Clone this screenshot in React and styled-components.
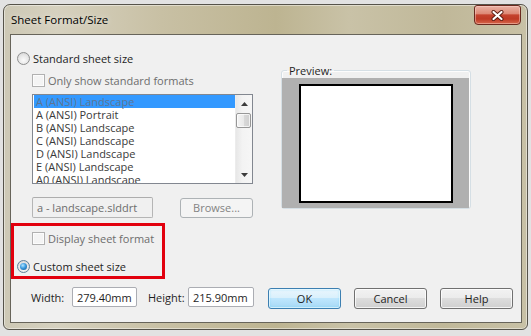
import React from "react";
import styled, { createGlobalStyle, css } from "styled-components";

const GlobalStyle = createGlobalStyle`
  html, body { margin: 0; padding: 0; }
  body {
    background: #e2e2e2;
    font-family: "Open Sans", "Noto Sans", "Liberation Sans", sans-serif;
    font-size: 11px;
    color: #1e1e1e;
  }
  * { box-sizing: border-box; }
`;

const Desktop = styled.div`
  width: 531px;
  height: 336px;
  padding: 4px 3px 0 3px;
  overflow: hidden;
`;

const Window = styled.div`
  width: 525px;
  height: 326px;
  border: 1px solid #56534a;
  border-radius: 7px 7px 6px 6px;
  background: linear-gradient(
    90deg,
    #cdc8b5 0%,
    #d6d1bf 10%,
    #c8c0a4 30%,
    #bdb491 52%,
    #c9c2a7 66%,
    #c0b899 84%,
    #c8c1a6 100%
  );
  box-shadow: inset 0 0 0 1px rgba(255, 255, 255, 0.45);
  display: flex;
  flex-direction: column;
  padding: 0 5px 6px 6px;
`;

const TitleBar = styled.div`
  height: 29px;
  display: flex;
  justify-content: space-between;
  align-items: center;
`;

const Title = styled.div`
  padding-left: 1px;
  font-size: 11.5px;
  color: #000;
  text-shadow: 0 0 6px rgba(255, 255, 255, 0.7);
`;

const CloseButton = styled.div`
  align-self: flex-start;
  width: 47px;
  height: 20px;
  margin-right: 1px;
  border: 1px solid #6b2a1f;
  border-radius: 3px 3px 4px 4px;
  background: linear-gradient(
    180deg,
    #eab2a4 0%,
    #de8a77 42%,
    #c5432e 50%,
    #bf3a25 72%,
    #d6684c 100%
  );
  box-shadow: inset 0 0 0 1px rgba(255, 220, 210, 0.45);
  display: flex;
  align-items: center;
  justify-content: center;
`;

const Client = styled.div`
  flex: 1;
  position: relative;
  border: 1px solid #67645a;
  background: #f0f0f0;
  padding: 15px 0 0 6px;
  display: flex;
  flex-direction: column;
`;

const TopSection = styled.div`
  display: flex;
  align-items: flex-start;
`;

const LeftColumn = styled.div`
  width: 235px;
  display: flex;
  flex-direction: column;
`;

const OptionRow = styled.label`
  height: 16px;
  display: flex;
  align-items: center;
  gap: 3px;
  margin-top: ${(p) => p.$top || 0}px;
  padding-left: ${(p) => p.$indent || 0}px;
  color: ${(p) => (p.$disabled ? "#6d6d6d" : "#1e1e1e")};
  white-space: nowrap;
`;

const Radio = styled.span`
  position: relative;
  width: 13px;
  height: 13px;
  flex-shrink: 0;
  border-radius: 50%;
  border: 1px solid #8e8f8f;
  background: radial-gradient(circle at 50% 65%, #fbfbfb 0%, #e6e6e6 55%, #cdcdcd 100%);
  ${(p) =>
    p.$checked &&
    css`
      border-color: #5e7f99;
      &::after {
        content: "";
        position: absolute;
        left: 2px;
        top: 2px;
        width: 7px;
        height: 7px;
        border-radius: 50%;
        background: radial-gradient(circle at 40% 35%, #b4e6ff 0%, #3b9be0 45%, #0e4f88 100%);
      }
    `}
`;

const Checkbox = styled.span`
  width: 13px;
  height: 13px;
  flex-shrink: 0;
  border: 1px solid #b1b1b1;
  background: #f4f4f4;
  box-shadow: inset 0 0 0 1px #fcfcfc;
`;

const ListBox = styled.div`
  margin-top: 6px;
  margin-left: 15px;
  width: 221px;
  height: 90px;
  border: 1px solid #828790;
  background: #fff;
  display: flex;
  overflow: hidden;
`;

const ListItems = styled.div`
  flex: 1;
  padding: 0 0 0 1px;
  overflow: hidden;
`;

const ListItem = styled.div`
  height: 13px;
  line-height: 13px;
  padding-left: 2px;
  white-space: nowrap;
  color: ${(p) => (p.$selected ? "#5f7593" : "#3a3a3a")};
  background: ${(p) => (p.$selected ? "#3399ff" : "transparent")};
`;

const ScrollBar = styled.div`
  width: 17px;
  display: flex;
  flex-direction: column;
  background: linear-gradient(90deg, #e7e7e7 0%, #f3f3f3 40%, #f6f6f6 100%);
  border-left: 1px solid #ececec;
`;

const ScrollArrow = styled.div`
  height: 17px;
  display: flex;
  align-items: center;
  justify-content: center;
`;

const ScrollTrack = styled.div`
  flex: 1;
  padding: 1px 1px 0 0;
`;

const Thumb = styled.div`
  width: 15px;
  height: 15px;
  border: 1px solid #979797;
  border-radius: 2px;
  background: linear-gradient(90deg, #f4f4f4 0%, #e9e9e9 50%, #d9d9d9 51%, #cfcfcf 100%);
  box-shadow: inset 0 0 0 1px rgba(255, 255, 255, 0.7);
`;

const FileRow = styled.div`
  margin-top: 13px;
  margin-left: 15px;
  width: 221px;
  height: 21px;
  display: flex;
  align-items: center;
  justify-content: space-between;
`;

const TextBox = styled.div`
  width: ${(p) => p.$width}px;
  height: ${(p) => p.$height || 20}px;
  border: 1px solid ${(p) => (p.$disabled ? "#b5b5b5" : "#abadb3")};
  border-top-color: ${(p) => (p.$disabled ? "#adadad" : "#abadb3")};
  border-radius: 2px;
  background: ${(p) => (p.$disabled ? "#f0f0f0" : "#fff")};
  color: ${(p) => (p.$disabled ? "#6d6d6d" : "#1e1e1e")};
  padding-left: 4px;
  display: flex;
  align-items: center;
  white-space: nowrap;
`;

const Button = styled.div`
  width: 73px;
  height: ${(p) => p.$height || 21}px;
  border-radius: 3px;
  display: flex;
  align-items: center;
  justify-content: center;
  color: #1e1e1e;
  border: 1px solid #707070;
  background: linear-gradient(180deg, #f2f2f2 0%, #ebebeb 48%, #dddddd 50%, #cfcfcf 100%);
  box-shadow: inset 0 0 0 1px rgba(255, 255, 255, 0.75);
  ${(p) =>
    p.$default &&
    css`
      border-color: #3c7fb1;
      background: linear-gradient(180deg, #eaf6fd 0%, #d9f0fc 48%, #bee6fd 50%, #a7d9f5 100%);
      box-shadow: inset 0 0 0 1px rgba(255, 255, 255, 0.6), inset 0 0 2px 1px rgba(72, 205, 255, 0.35);
    `}
  ${(p) =>
    p.$disabled &&
    css`
      border-color: #adb2b5;
      background: #f4f4f4;
      color: #838383;
      box-shadow: none;
    `}
`;

const GroupBox = styled.fieldset`
  margin: 13px 0 0 29px;
  padding: 0 1px 0 0;
  width: 190px;
  min-width: 0;
  border: 1px solid #d5dfe5;
  border-radius: 3px;
  box-shadow: inset 0 0 0 1px rgba(255, 255, 255, 0.8);
`;

const Legend = styled.legend`
  margin-left: 5px;
  padding: 0 2px;
  line-height: 15px;
  color: #1e1e1e;
`;

const Canvas = styled.div`
  height: 130px;
  background: #b0b0b0;
  padding: 6px 0 0 17px;
`;

const Paper = styled.div`
  width: 154px;
  height: 119px;
  border: 2px solid #000;
  background: #fff;
`;

const BottomRow = styled.div`
  margin-top: 13px;
  padding-left: 14px;
  display: flex;
  align-items: flex-start;
`;

const FieldLabel = styled.span`
  width: ${(p) => p.$width}px;
  height: 20px;
  margin-left: ${(p) => p.$left || 0}px;
  display: flex;
  align-items: center;
  white-space: nowrap;
`;

const ButtonGroup = styled.div`
  margin: 1px 0 0 14px;
  display: flex;
  gap: 13px;
`;

const Annotation = styled.div`
  position: absolute;
  left: 0;
  top: 188px;
  width: 154px;
  height: 56px;
  border: 3px solid #e2000e;
  pointer-events: none;
`;

const CloseGlyph = () => (
  <svg width="13" height="11" viewBox="0 0 13 11">
    <path d="M2.5 2 L10.5 9 M10.5 2 L2.5 9" stroke="#5a1a10" strokeWidth="4" strokeLinecap="round" />
    <path d="M2.5 2 L10.5 9 M10.5 2 L2.5 9" stroke="#ffffff" strokeWidth="2.2" strokeLinecap="round" />
  </svg>
);

const Arrow = ({ down }) => (
  <svg width="7" height="4" viewBox="0 0 7 4">
    {down ? <polygon points="0,0 7,0 3.5,4" fill="#3c3c3c" /> : <polygon points="0,4 7,4 3.5,0" fill="#3c3c3c" />}
  </svg>
);

const sheets = [
  "A (ANSI) Landscape",
  "A (ANSI) Portrait",
  "B (ANSI) Landscape",
  "C (ANSI) Landscape",
  "D (ANSI) Landscape",
  "E (ANSI) Landscape",
  "A0 (ANSI) Landscape",
];

export default function App() {
  return (
    <>
      <GlobalStyle />
      <Desktop>
        <Window>
          <TitleBar>
            <Title>Sheet Format/Size</Title>
            <CloseButton>
              <CloseGlyph />
            </CloseButton>
          </TitleBar>
          <Client>
            <TopSection>
              <LeftColumn>
                <OptionRow>
                  <Radio />
                  Standard sheet size
                </OptionRow>
                <OptionRow $top={6} $indent={15} $disabled>
                  <Checkbox />
                  Only show standard formats
                </OptionRow>
                <ListBox>
                  <ListItems>
                    {sheets.map((s, i) => (
                      <ListItem key={s} $selected={i === 0}>
                        {s}
                      </ListItem>
                    ))}
                  </ListItems>
                  <ScrollBar>
                    <ScrollArrow>
                      <Arrow />
                    </ScrollArrow>
                    <ScrollTrack>
                      <Thumb />
                    </ScrollTrack>
                    <ScrollArrow>
                      <Arrow down />
                    </ScrollArrow>
                  </ScrollBar>
                </ListBox>
                <FileRow>
                  <TextBox $width={121} $height={21} $disabled>
                    a - landscape.slddrt
                  </TextBox>
                  <Button $disabled $height={20}>
                    Browse...
                  </Button>
                </FileRow>
                <OptionRow $top={12} $indent={15} $disabled>
                  <Checkbox />
                  Display sheet format
                </OptionRow>
                <OptionRow $top={12}>
                  <Radio $checked />
                  Custom sheet size
                </OptionRow>
              </LeftColumn>
              <GroupBox>
                <Legend>Preview:</Legend>
                <Canvas>
                  <Paper />
                </Canvas>
              </GroupBox>
            </TopSection>
            <BottomRow>
              <FieldLabel $width={41}>Width:</FieldLabel>
              <TextBox $width={65}>279.40mm</TextBox>
              <FieldLabel $width={40} $left={11}>
                Height:
              </FieldLabel>
              <TextBox $width={66}>215.90mm</TextBox>
              <ButtonGroup>
                <Button $default>OK</Button>
                <Button>Cancel</Button>
                <Button>Help</Button>
              </ButtonGroup>
            </BottomRow>
            <Annotation />
          </Client>
        </Window>
      </Desktop>
    </>
  );
}
